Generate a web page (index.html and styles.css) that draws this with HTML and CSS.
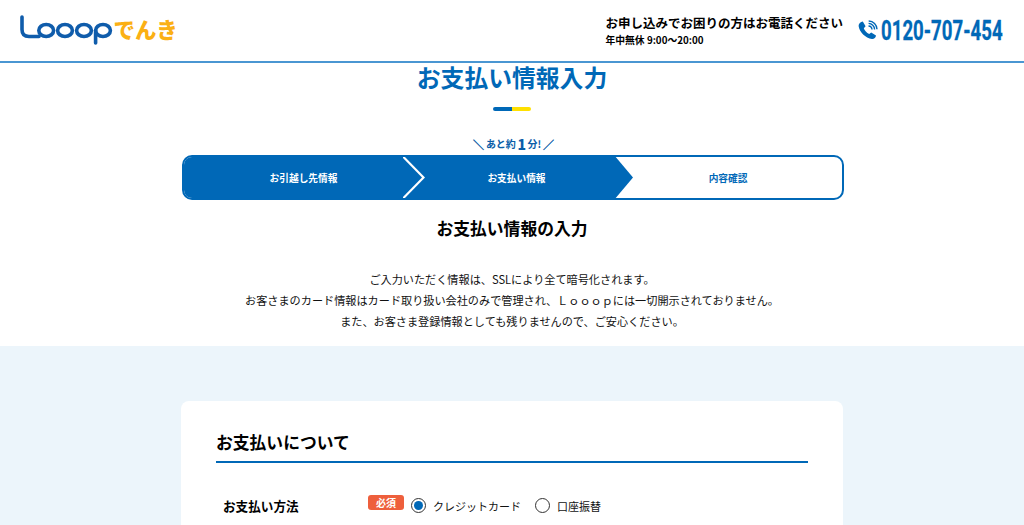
FILE: index.html
```html
<!DOCTYPE html>
<html lang="ja">
<head>
<meta charset="utf-8">
<title>お支払い情報入力</title>
<link rel="stylesheet" href="styles.css">
</head>
<body>
<header class="site-header">
  <svg class="logo" width="160" height="32" viewBox="0 0 160 32" aria-label="Looopでんき">
    <g fill="none" stroke="#0f5cab" stroke-width="3.6" stroke-linecap="round">
      <path d="M2 3 V15.5 Q2 22.5 9 22.5 H19"/>
      <ellipse cx="26.2" cy="16.5" rx="7.4" ry="6"/>
      <ellipse cx="45" cy="16.5" rx="7.4" ry="6"/>
      <ellipse cx="64" cy="16.5" rx="7.4" ry="6"/>
      <ellipse cx="83" cy="16.5" rx="7.4" ry="6"/>
      <path d="M75.6 16.5 V29"/>
    </g>
    <text class="logo-kana" x="93.5" y="23.5">でんき</text>
  </svg>
  <div class="contact">
    <div class="contact-text">
      <p class="contact-lead">お申し込みでお困りの方はお電話ください</p>
      <p class="contact-hours">年中無休 9:00〜20:00</p>
    </div>
    <div class="tel">
      <svg class="tel-icon" width="20" height="20" viewBox="0 0 20 20">
        <path fill="#0068b7" d="M4.8 1.4 7.6 6.2 5.8 8.2C6.6 10.6 8.6 12.8 11.2 14L13.2 12.4 18 15.4C17.8 17.6 16 19.2 14 19 7.4 18.2 1.4 12 .6 6 .4 3.6 2.6 1.8 4.8 1.4Z"/>
        <path fill="none" stroke="#0068b7" stroke-width="1.4" d="M10.5 6C12.4 6.1 13.9 7.6 14 9.5M10.6 3.4C13.9 3.5 16.5 6.1 16.6 9.4M10.7 1C15.3 1.1 18.9 4.7 19 9.3"/>
      </svg>
      <span class="tel-box"><span class="tel-number">0120-707-454</span></span>
    </div>
  </div>
</header>

<main>
  <section class="intro">
    <h1 class="page-title">お支払い情報入力</h1>
    <div class="title-bar"><span class="title-bar-blue"></span><span class="title-bar-yellow"></span></div>
    <p class="remaining">
      <span class="slash">＼</span>あと約<strong class="remaining-num">1</strong>分!<span class="slash">／</span>
    </p>
    <ol class="steps">
      <li class="step step-first">お引越し先情報</li>
      <li class="step step-second">お支払い情報</li>
      <li class="step step-third">内容確認</li>
    </ol>
    <h2 class="section-title">お支払い情報の入力</h2>
    <p class="notice">ご入力いただく情報は、SSLにより全て暗号化されます。<br>お客さまのカード情報はカード取り扱い会社のみで管理され、Ｌｏｏｏｐには一切開示されておりません。<br>また、お客さま登録情報としても残りませんので、ご安心ください。</p>
  </section>

  <section class="form-area">
    <div class="card">
      <h3 class="card-title">お支払いについて</h3>
      <div class="form-row">
        <span class="form-label">お支払い方法</span>
        <span class="badge">必須</span>
        <label class="radio-item"><span class="radio radio-on"></span>クレジットカード</label>
        <label class="radio-item"><span class="radio"></span>口座振替</label>
      </div>
    </div>
  </section>
</main>
</body>
</html>
```
FILE: styles.css
```css
* { box-sizing: border-box; }
html, body { margin: 0; padding: 0; }
body {
  height: 525px;
  overflow: hidden;
  background: #fff;
  color: #000;
  font-family: "Noto Sans CJK JP", "Noto Sans", sans-serif;
}
p, h1, h2, h3, ol { margin: 0; padding: 0; }

.site-header {
  height: 63px;
  border-bottom: 2px solid #4a96d2;
  display: flex;
  align-items: center;
  justify-content: space-between;
  padding: 0 21px 2px 20px;
}
.logo { display: block; margin-top: 1px; }
.logo-kana { font-size: 21.4px; font-weight: 900; fill: #fbb014; font-family: "Noto Sans CJK JP", sans-serif; }
.contact { display: flex; align-items: center; gap: 15px; }
.contact-lead { font-size: 12.5px; font-weight: 700; line-height: 20px; }
.contact-hours { font-size: 9.8px; font-weight: 700; line-height: 14px; }
.tel { display: flex; align-items: center; gap: 3px; }
.tel-icon { display: block; }
.tel-box { display: block; width: 122px; height: 28px; margin-top: 3px; }
.tel-number {
  display: inline-block;
  font-family: "Roboto", sans-serif;
  font-weight: 700;
  font-size: 27px;
  line-height: 28px;
  color: #0068b7;
  white-space: nowrap;
  -webkit-text-stroke: .3px #0068b7;
  transform: scaleX(.69);
  transform-origin: left center;
}

.intro { height: 283px; display: flex; flex-direction: column; align-items: center; }
.page-title { font-size: 23.8px; font-weight: 700; line-height: 30px; color: #0068b7; margin-top: -1px; }
.title-bar { display: flex; width: 38px; height: 4px; margin-top: 15px; border-radius: 2px; overflow: hidden; }
.title-bar-blue { flex: 1; background: #0068b7; }
.title-bar-yellow { flex: 1; background: #ffe000; }
.remaining { font-size: 10px; font-weight: 700; color: #0a5ea8; line-height: 20px; margin-top: 23px; margin-left: 3px; display: flex; align-items: center; height: 20px; }
.slash { font-size: 11px; font-weight: 700; margin: 0 2px; -webkit-text-stroke: .4px #0a5ea8; }
.remaining-num { font-size: 14px; margin: 0 1.5px; }

.steps {
  list-style: none;
  width: 662px;
  height: 45px;
  margin-top: 1px;
  margin-left: 2px;
  display: flex;
  border: 2px solid #0068b7;
  border-radius: 10px;
  overflow: hidden;
  background: #fff;
}
.step {
  position: relative;
  display: flex;
  align-items: center;
  justify-content: center;
  font-size: 9.7px;
  font-weight: 700;
  color: #fff;
}
.step-first { width: 219px; background: #0068b7; padding-left: 20px; z-index: 2; }
.step-second { width: 211px; background: #0068b7; padding-left: 16px; z-index: 1; }
.step-third { flex: 1; color: #0068b7; }
.step-first::before,
.step-first::after,
.step-second::after {
  content: "";
  position: absolute;
  top: -2px;
  bottom: -2px;
  clip-path: polygon(0 0, 100% 50%, 0 100%);
}
.step-first::before { left: 100%; width: 22px; background: #fff; }
.step-first::after { left: calc(100% - 3px); width: 22px; background: #0068b7; }
.step-second::after { left: 100%; width: 19px; background: #0068b7; }

.section-title { font-size: 16.8px; font-weight: 700; line-height: 24px; margin-top: 16px; }
.notice { font-size: 11.15px; line-height: 21px; text-align: center; margin-top: 29px; color: #111; }

.form-area { background: #ecf5fb; padding-top: 55px; height: 300px; }
.card { width: 662px; margin-left: 181px; background: #fff; border-radius: 8px; padding: 28px 35px 40px; height: 300px; }
.card-title { font-size: 16.8px; font-weight: 700; line-height: 26px; padding-bottom: 6px; border-bottom: 2px solid #0068b7; }
.form-row { display: flex; align-items: center; margin-top: 32px; padding-left: 7px; height: 20px; }
.form-label { width: 145px; font-size: 12.6px; font-weight: 700; }
.badge { width: 36px; height: 15px; margin-top: -6px; margin-right: 7px; background: #ee5f3c; color: #fff; font-size: 10px; font-weight: 700; line-height: 15px; text-align: center; border-radius: 3px; }
.radio-item { display: flex; align-items: center; gap: 7px; font-size: 11px; margin-right: 14px; margin-top: 2px; color: #111; }
.radio { position: relative; width: 15px; height: 15px; border: 1px solid #333; border-radius: 50%; background: #fff; margin-top: -1px; }
.radio-on::after { content: ""; position: absolute; inset: 2px; border-radius: 50%; background: #0068b7; }
```
